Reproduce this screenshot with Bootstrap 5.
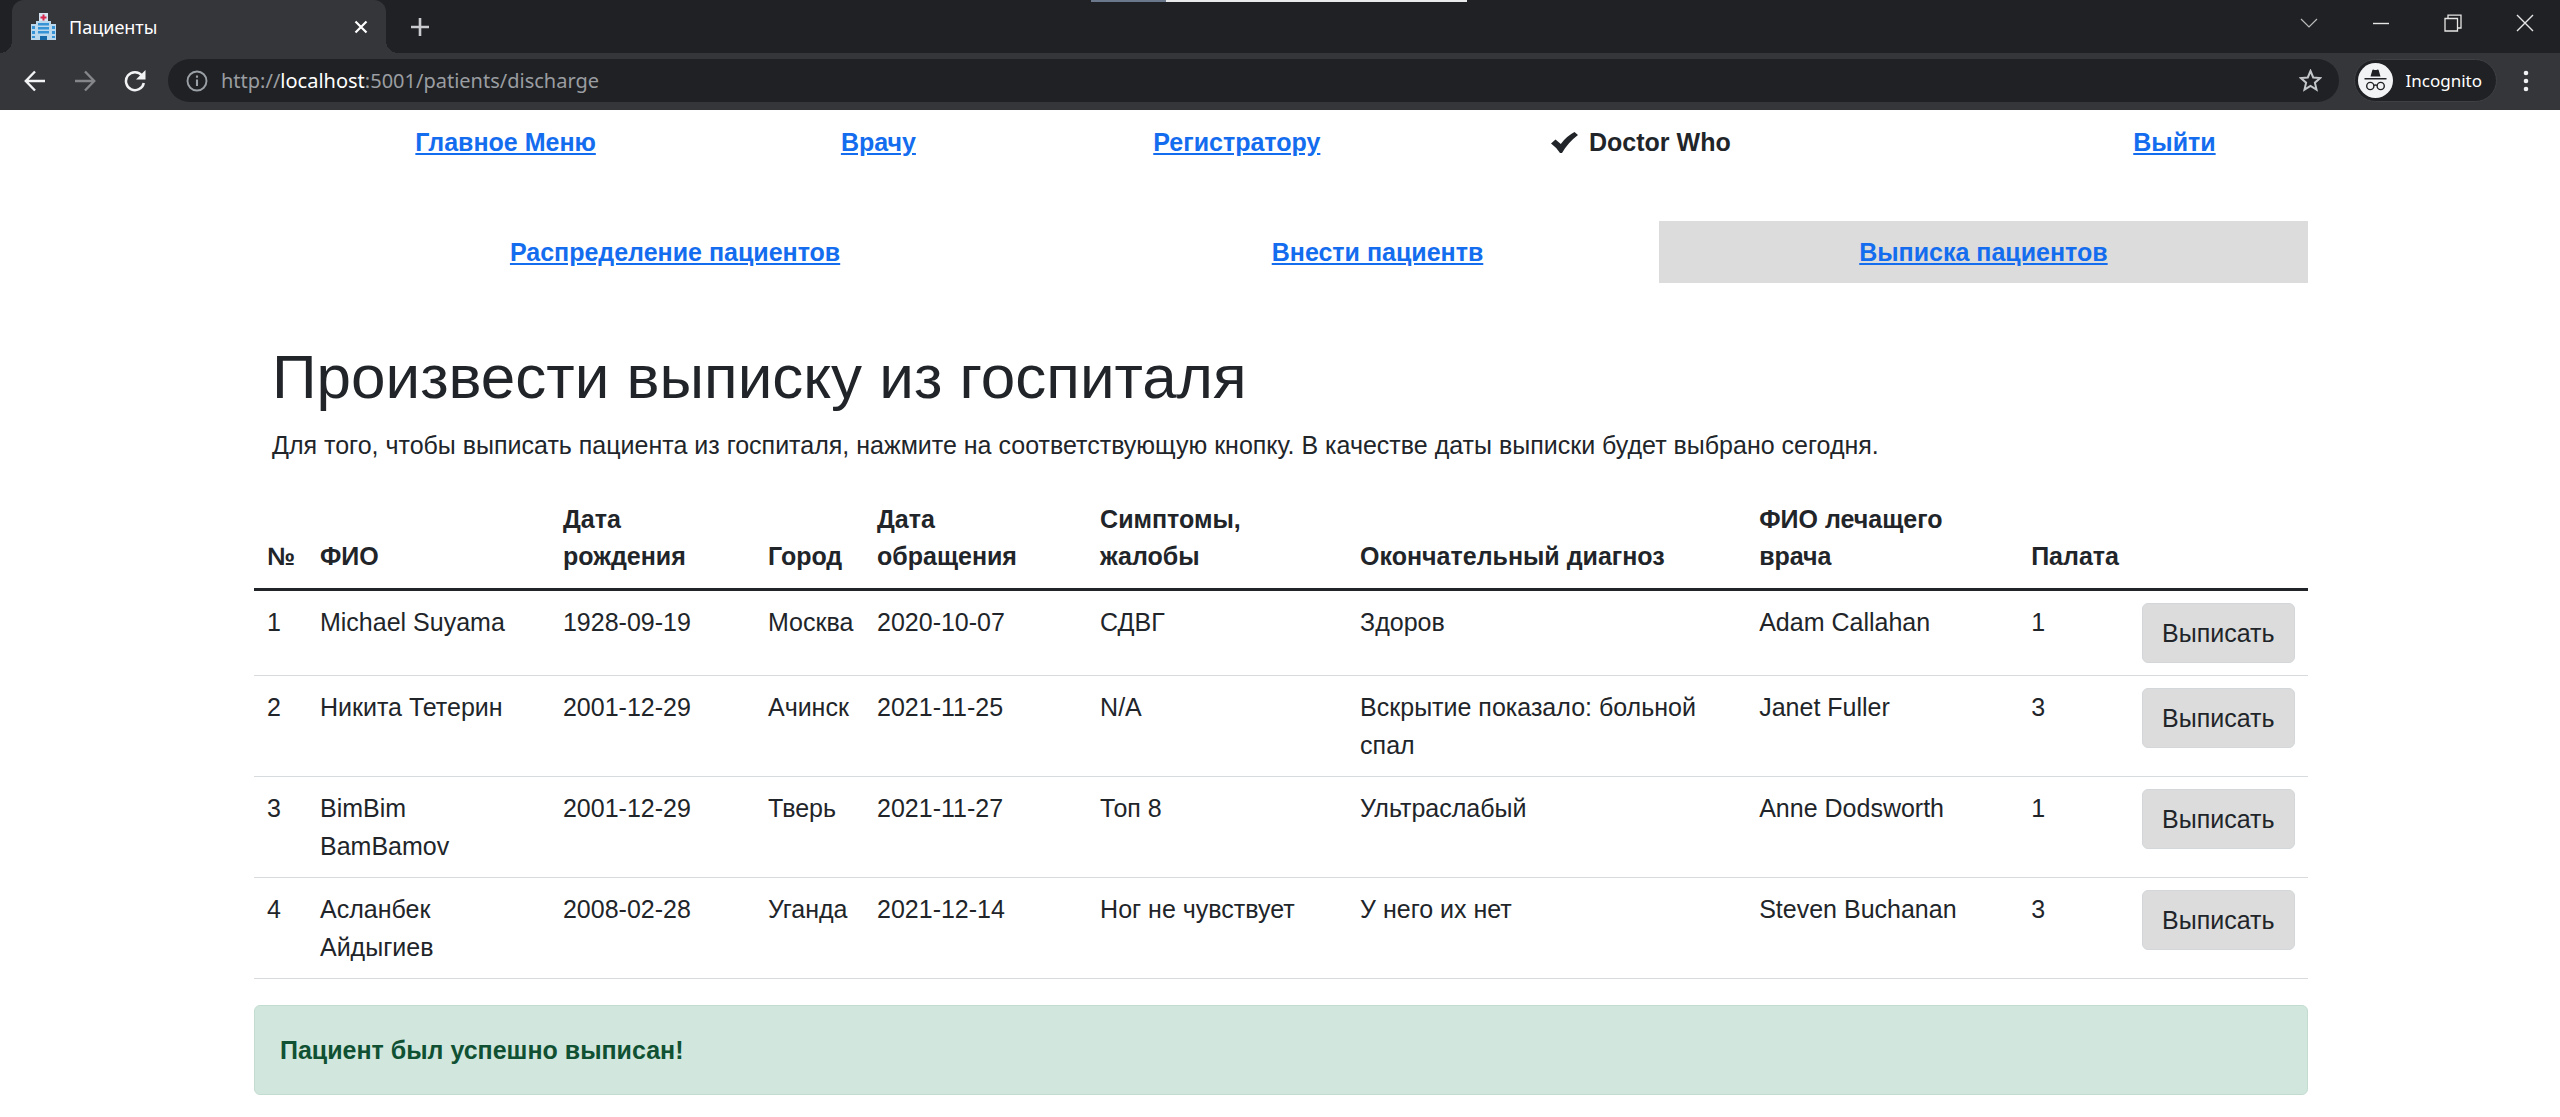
<!DOCTYPE html>
<html lang="ru">
<head>
<meta charset="utf-8">
<meta name="viewport" content="width=device-width, initial-scale=1">
<title>Пациенты</title>
<link rel="stylesheet" href="https://cdn.jsdelivr.net/npm/bootstrap@5.3.0/dist/css/bootstrap.min.css">
<style>
  body { font-family: "Liberation Sans", Arial, sans-serif; font-size: 25px; line-height: 37px; color: #212529; background: #fff; }
  svg { display: block; flex: none; }

  /* browser window */
  .chrome { font-family: "Noto Sans", sans-serif; background: #35363a; color: #fff; }
  .chrome button { background: none; border: 0; padding: 0; color: inherit; display: flex; }
  .strip { height: 53px; background: #202124; padding-left: 12px; padding-right: 26px; }
  .snap-line { position: absolute; top: 0; left: 1091px; width: 376px; height: 2px; background: linear-gradient(90deg, #6b788c 75px, #e8eaec 75px); }
  .tab-active { width: 374px; background: #35363a; border-radius: 12px 12px 0 0; padding: 0 18px 0 19px; font-size: 18px; line-height: 24px; gap: 13px; position: relative; }
  .tab-active::before, .tab-active::after { content: ""; position: absolute; bottom: 0; width: 12px; height: 12px; }
  .tab-active::before { left: -12px; background: radial-gradient(circle at 0 0, #202124 12px, #35363a 12px); }
  .tab-active::after { right: -12px; background: radial-gradient(circle at 100% 0, #202124 12px, #35363a 12px); }
  .win-buttons { gap: 54px; padding-bottom: 8px; }
  .toolbar { height: 57px; padding: 0 24px 2px; }
  .nav-buttons { gap: 28px; padding-right: 22px; }
  .omnibox { height: 43px; border-radius: 22px; background: #202124; padding: 0 17px 0 18px; }
  .address { font-size: 20px; line-height: 30px; color: #9a9da1; padding-left: 13px; }
  .address b { color: #fff; font-weight: 400; }
  .chrome .private-pill { height: 43px; border-radius: 22px; background: #202124; border: 1px solid #3f4044; padding: 0 14px 0 3px; gap: 13px; font-size: 17px; line-height: 24px; margin-left: 15px; margin-right: 19px; }

  /* page */
  .page-box { max-width: 2056px; padding-left: 2px; }
  .page-box a { font-weight: 700; color: #146cee; }
  .menu-grid > li { padding: 12px; text-align: center; line-height: 38px; }
  .menu-top { display: grid; grid-template-columns: 24.5% 11.8% 23.1% 27.6% 13%; padding-top: 1px; }
  .menu-sub { display: grid; grid-template-columns: 41% 27.4% 31.6%; margin-top: 48px; }
  .menu-grid > .who { display: flex; align-items: center; gap: 11px; padding-left: 77px; font-weight: 700; }
  .menu-grid > .current { background: #dcdcdc; }
  .intro { padding: 56px 18px 0; }
  .intro h1 { font-size: 62px; line-height: 75px; margin-bottom: 12px; font-weight: 400; }
  .intro p { line-height: 38px; margin-bottom: 24px; }
  .patients { table-layout: fixed; margin-bottom: 26px; --bs-table-color: #212529; }
  .patients > thead > tr > th { padding: 13px; border-bottom: 3px solid #212529; line-height: 37px; vertical-align: bottom; }
  .patients > tbody > tr > td { padding: 12px 13px; line-height: 38px; border-bottom: 1px solid #d8dbde; }
  .patients .btn { font-size: 25px; line-height: 38px; padding: 10px 19px; border: 1px solid #d3d7da; border-radius: 6px; background: #dcdcdc; color: #212529; white-space: nowrap; display: block; }
  .done-note { padding: 25px; line-height: 38px; border-radius: 6px; background: #d1e7dd; border-color: #c3dcd0; color: #0f5132; }
</style>
</head>
<body>
<header class="chrome">
  <div class="snap-line"></div>
  <div class="strip d-flex align-items-stretch">
    <div class="tab-active d-flex align-items-center">
      <svg width="25" height="27" viewBox="0 0 25 27"><path fill="#d5e4f0" d="M8 0h9v9h-9z"/><path fill="#d6244b" d="M11.500 1.500h2v2h2v2h-2v2h-2v-2h-2v-2h2z"/><path fill="#bcd8ec" d="M0 11h5V8h15v3h5v16H0z"/><path fill="#3593d6" d="M1 13h3v3H1zm0 5h3v3H1zm0 5h3v2H1zM21 13h3v3h-3zm0 5h3v3h-3zm0 5h3v2h-3zM7 10h11v2.500H7zm0 4h11v2.500H7zm0 4h11v2.500H7z"/><path fill="#1769a8" d="M9 23h7v4H9z"/></svg>
      <span class="flex-grow-1">Пациенты</span>
      <button type="button" aria-label="Закрыть вкладку"><svg width="14" height="14" viewBox="0 0 14 14"><path d="M1.500 1.500l11 11m0-11l-11 11" stroke="#fff" stroke-width="2.200"/></svg></button>
    </div>
    <button type="button" class="align-self-center ms-4" aria-label="Новая вкладка"><svg width="20" height="20" viewBox="0 0 20 20"><path d="M10 1v18M1 10h18" stroke="#c9cbce" stroke-width="2.600"/></svg></button>
    <div class="win-buttons d-flex align-items-center ms-auto">
      <button type="button" aria-label="Поиск вкладок"><svg width="18" height="18" viewBox="0 0 18 18"><path d="M1 5l8 8 8-8" fill="none" stroke="#bbb" stroke-width="1.200"/></svg></button>
      <button type="button" aria-label="Свернуть"><svg width="18" height="18" viewBox="0 0 18 18"><path d="M1 9.500h16" stroke="#e6e6e6" stroke-width="1.400"/></svg></button>
      <button type="button" aria-label="Окно"><svg width="18" height="18" viewBox="0 0 18 18"><path d="M1 4.500h12.500V17H1zM4 4.500V1.200h13V14h-3.500" fill="none" stroke="#e6e6e6" stroke-width="1.300"/></svg></button>
      <button type="button" aria-label="Закрыть"><svg width="18" height="18" viewBox="0 0 18 18"><path d="M1 1l16 16M17 1L1 17" stroke="#e6e6e6" stroke-width="1.400"/></svg></button>
    </div>
  </div>
  <div class="toolbar d-flex align-items-center">
    <div class="nav-buttons d-flex align-items-center">
      <button type="button" aria-label="Назад"><svg width="22" height="22" viewBox="0 0 22 22"><path d="M21 11H2M11 1.500L1.800 11l9.200 9.500" fill="none" stroke="#f1f3f4" stroke-width="2.400"/></svg></button>
      <button type="button" aria-label="Вперёд"><svg width="22" height="22" viewBox="0 0 22 22"><path d="M1 11h19M11 1.500l9.200 9.500-9.200 9.500" fill="none" stroke="#85868a" stroke-width="2.400"/></svg></button>
      <button type="button" aria-label="Обновить"><svg width="22" height="22" viewBox="0 0 22 22"><path d="M18 5.500A9 9 0 1 0 19.800 13" fill="none" stroke="#f1f3f4" stroke-width="2.500"/><path d="M21.500 0v9.500H12z" fill="#f1f3f4"/></svg></button>
    </div>
    <div class="omnibox d-flex align-items-center flex-grow-1">
      <svg width="22" height="22" viewBox="0 0 22 22"><circle cx="11" cy="11" r="9.500" fill="none" stroke="#9aa0a6" stroke-width="1.900"/><path d="M11 9.500V16M11 5.500v2.200" stroke="#9aa0a6" stroke-width="2.100"/></svg>
      <div class="address flex-grow-1" role="textbox" contenteditable="true" spellcheck="false" aria-label="Адрес">http://<b>localhost</b>:5001/patients/discharge</div>
      <button type="button" aria-label="Добавить в закладки"><svg width="23" height="23" viewBox="0 0 23 23"><path d="M11.500 2l2.700 6.500 7 .6-5.300 4.600 1.600 6.900-6-3.700-6 3.700 1.600-6.900L1.800 9.100l7-.6z" fill="none" stroke="#c4c7ca" stroke-width="2"/></svg></button>
    </div>
    <button type="button" class="private-pill align-items-center">
      <svg width="35" height="35" viewBox="0 0 35 35"><circle cx="17.500" cy="17.500" r="17.500" fill="#f1f3f4"/><path fill="#202124" d="M12.500 13.500l1.800-6.200c.2-.7.800-.9 1.400-.6q1.800.8 3.600 0c.6-.3 1.200-.1 1.400.6l1.800 6.200zM6.500 15h22v1.500h-22z"/><g fill="none" stroke="#202124" stroke-width="1.400"><circle cx="12.300" cy="23" r="3.600"/><circle cx="22.700" cy="23" r="3.600"/><path d="M15.900 22.500q1.600-1 3.200 0"/></g></svg>
      <span>Incognito</span>
    </button>
    <button type="button" aria-label="Меню"><svg width="20" height="22" viewBox="0 0 20 22"><g fill="#f1f3f4"><circle cx="10" cy="3" r="2.300"/><circle cx="10" cy="11" r="2.300"/><circle cx="10" cy="19" r="2.300"/></g></svg></button>
  </div>
</header>

<main class="page-box mx-auto">
  <nav aria-label="Основное меню">
    <ul class="menu-grid menu-top list-unstyled mb-0">
      <li><a href="#main">Главное Меню</a></li>
      <li><a href="#doctor">Врачу</a></li>
      <li><a href="#registrar">Регистратору</a></li>
      <li class="who"><svg width="27" height="21" viewBox="0 0 27 21"><path fill="#212529" d="M0 11.500L4.500 7.500 9.800 12Q15 4.500 23.500 0L27 3Q17 10.500 11 21H9Q5 15 0 11.500z"/></svg><span>Doctor Who</span></li>
      <li><a href="#logout">Выйти</a></li>
    </ul>
  </nav>
  <nav aria-label="Пациенты">
    <ul class="menu-grid menu-sub list-unstyled mb-0">
      <li><a href="#assign">Распределение пациентов</a></li>
      <li><a href="#add">Внести пациентв</a></li>
      <li class="current"><a href="#discharge" aria-current="page">Выписка пациентов</a></li>
    </ul>
  </nav>

  <div class="intro">
    <h1>Произвести выписку из госпиталя</h1>
    <p>Для того, чтобы выписать пациента из госпиталя, нажмите на соответствующую кнопку. В качестве даты выписки будет выбрано сегодня.</p>
  </div>

  <table class="table patients">
    <colgroup>
      <col style="width:2.58%"><col style="width:11.83%"><col style="width:9.98%"><col style="width:5.31%"><col style="width:10.86%"><col style="width:12.66%"><col style="width:19.43%"><col style="width:13.24%"><col style="width:5.4%"><col style="width:8.71%">
    </colgroup>
    <thead>
      <tr><th scope="col">№</th><th scope="col">ФИО</th><th scope="col">Дата<br>рождения</th><th scope="col">Город</th><th scope="col">Дата<br>обращения</th><th scope="col">Симптомы,<br>жалобы</th><th scope="col">Окончательный диагноз</th><th scope="col">ФИО лечащего<br>врача</th><th scope="col">Палата</th><th scope="col"></th></tr>
    </thead>
    <tbody>
      <tr><td>1</td><td>Michael Suyama</td><td>1928-09-19</td><td>Москва</td><td>2020-10-07</td><td>СДВГ</td><td>Здоров</td><td>Adam Callahan</td><td>1</td><td><button type="button" class="btn">Выписать</button></td></tr>
      <tr><td>2</td><td>Никита Тетерин</td><td>2001-12-29</td><td>Ачинск</td><td>2021-11-25</td><td>N/A</td><td>Вскрытие показало: больной спал</td><td>Janet Fuller</td><td>3</td><td><button type="button" class="btn">Выписать</button></td></tr>
      <tr><td>3</td><td>BimBim<br>BamBamov</td><td>2001-12-29</td><td>Тверь</td><td>2021-11-27</td><td>Топ 8</td><td>Ультраслабый</td><td>Anne Dodsworth</td><td>1</td><td><button type="button" class="btn">Выписать</button></td></tr>
      <tr><td>4</td><td>Асланбек<br>Айдыгиев</td><td>2008-02-28</td><td>Уганда</td><td>2021-12-14</td><td>Ног не чувствует</td><td>У него их нет</td><td>Steven Buchanan</td><td>3</td><td><button type="button" class="btn">Выписать</button></td></tr>
    </tbody>
  </table>

  <div class="alert done-note mb-0" role="alert"><strong>Пациент был успешно выписан!</strong></div>
</main>
<script src="https://cdn.jsdelivr.net/npm/bootstrap@5.3.0/dist/js/bootstrap.bundle.min.js"></script>
</body>
</html>
